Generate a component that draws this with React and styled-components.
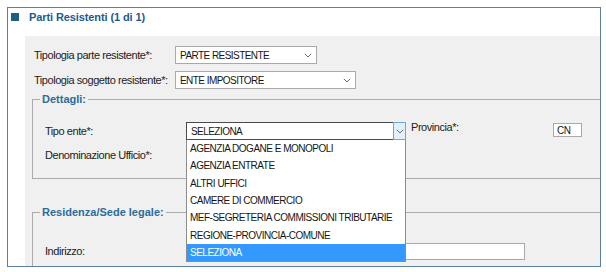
import React from "react";
import styled, { createGlobalStyle } from "styled-components";

const GlobalStyle = createGlobalStyle`
  html, body { margin: 0; padding: 0; background: #ffffff; }
  body { font-family: "Liberation Sans", Arial, sans-serif; }
  * { box-sizing: border-box; }
`;

const Page = styled.div`
  padding: 7px 5px 0 7px;
  width: 606px;
`;

const Frame = styled.div`
  border: 1px solid #5b80a4;
  height: 260px;
  overflow: hidden;
  background: #ffffff;
  display: flex;
  flex-direction: column;
`;

const Header = styled.div`
  height: 28px;
  padding: 0 0 10px 3px;
  display: flex;
  align-items: center;
  gap: 10px;
  flex: none;
`;

const Square = styled.span`
  width: 8px;
  height: 8px;
  background: #1d5f7e;
  display: block;
`;

const Title = styled.span`
  font-size: 11px;
  font-weight: bold;
  color: #1b5c8c;
  letter-spacing: -0.1px;
  line-height: 14px;
`;

const Panel = styled.div`
  flex: 1;
  margin-left: 17px;
  background: #f0f0f0;
  padding: 10px 0 0 7px;
`;

const TopRow = styled.div`
  display: flex;
  align-items: center;
  height: 18px;
  padding-left: 2px;
  margin-bottom: ${(p) => p.$gap || 0}px;
`;

const Label = styled.span`
  width: ${(p) => p.$w || 141}px;
  flex: none;
  font-size: 11px;
  letter-spacing: -0.45px;
  color: #222222;
  line-height: 13px;
  align-self: ${(p) => (p.$top ? "flex-start" : "center")};
  margin-top: ${(p) => p.$mt || 0}px;
`;

const SelectBox = styled.div`
  position: relative;
  width: ${(p) => p.$w}px;
  height: 18px;
  flex: none;
  background: #ffffff;
  border: 1px solid ${(p) => (p.$focused ? "#4a4a4a" : "#a9a9a9")};
  display: flex;
  align-items: center;
  padding-left: 4px;
  font-size: 10px;
  letter-spacing: -0.55px;
  color: #151515;
  line-height: 12px;
`;

const SelectText = styled.span`
  flex: 1;
  padding-top: 1px;
`;

const ArrowArea = styled.span`
  width: ${(p) => (p.$focused ? 13 : 16)}px;
  align-self: stretch;
  display: flex;
  align-items: center;
  justify-content: center;
  background: ${(p) => (p.$focused ? "#e3effa" : "transparent")};
  border: ${(p) => (p.$focused ? "1px solid #6ea6da" : "none")};
  margin: ${(p) => (p.$focused ? "-1px -1px -1px 0" : "0")};
`;

const Chevron = () => (
  <svg width="8" height="5" viewBox="0 0 8 5">
    <path d="M0.8 0.8 L4 4 L7.2 0.8" fill="none" stroke="#6a6a6a" strokeWidth="1" />
  </svg>
);

const Select = ({ w, value, focused, children }) => (
  <SelectBox $w={w} $focused={focused}>
    <SelectText>{value}</SelectText>
    <ArrowArea $focused={focused}>
      <Chevron />
    </ArrowArea>
    {children}
  </SelectBox>
);

const Fieldset = styled.fieldset`
  margin: ${(p) => p.$mt}px -10px 0 0;
  border: 1px solid #ababab;
  padding: ${(p) => p.$pt}px 0 ${(p) => p.$pb}px 12px;
  min-width: 0;
`;

const Legend = styled.legend`
  margin-left: -5px;
  padding: 0 2px;
  font-size: 11px;
  font-weight: bold;
  color: #2c6c9c;
  line-height: 13px;
`;

const FieldRow = styled.div`
  display: flex;
  align-items: center;
  height: ${(p) => p.$h || 18}px;
  margin-top: ${(p) => p.$mt || 0}px;
`;

const TextInput = styled.div`
  width: ${(p) => p.$w}px;
  height: ${(p) => p.$h}px;
  flex: none;
  background: #ffffff;
  border: 1px solid #a9a9a9;
  font-size: 10px;
  letter-spacing: -0.4px;
  color: #151515;
  display: flex;
  align-items: center;
  padding: 1px 0 0 3px;
  align-self: ${(p) => (p.$top ? "flex-start" : "center")};
  margin-top: ${(p) => p.$mt || 0}px;
`;

const Spacer = styled.span`
  width: ${(p) => p.$w}px;
  flex: none;
`;

const DropList = styled.div`
  position: absolute;
  top: 100%;
  left: -1px;
  width: 220px;
  margin-top: 1px;
  background: #ffffff;
  border: 1px solid #8c8c8c;
  border-top: none;
  z-index: 10;
`;

const DropItem = styled.div`
  height: 17.3px;
  display: flex;
  align-items: center;
  padding: 1px 0 0 3px;
  font-size: 10px;
  letter-spacing: -0.5px;
  color: ${(p) => (p.$active ? "#ffffff" : "#151515")};
  background: ${(p) => (p.$active ? "#3399ff" : "transparent")};
`;

const options = [
  "AGENZIA DOGANE E MONOPOLI",
  "AGENZIA ENTRATE",
  "ALTRI UFFICI",
  "CAMERE DI COMMERCIO",
  "MEF-SEGRETERIA COMMISSIONI TRIBUTARIE",
  "REGIONE-PROVINCIA-COMUNE",
  "SELEZIONA",
];

export default function App() {
  return (
    <>
      <GlobalStyle />
      <Page>
        <Frame>
          <Header>
            <Square />
            <Title>Parti Resistenti (1 di 1)</Title>
          </Header>
          <Panel>
            <TopRow $gap={7}>
              <Label>Tipologia parte resistente*:</Label>
              <Select w={142} value="PARTE RESISTENTE" />
            </TopRow>
            <TopRow>
              <Label>Tipologia soggetto resistente*:</Label>
              <Select w={181} value="ENTE IMPOSITORE" />
            </TopRow>

            <Fieldset $mt={4} $pt={16} $pb={14}>
              <Legend>Dettagli:</Legend>
              <FieldRow>
                <Label>Tipo ente*:</Label>
                <Select w={220} value="SELEZIONA" focused>
                  <DropList>
                    {options.map((o) => (
                      <DropItem key={o} $active={o === "SELEZIONA"}>
                        {o}
                      </DropItem>
                    ))}
                  </DropList>
                </Select>
                <Spacer $w={5} />
                <Label $w={142} $top $mt={-1}>Provincia*:</Label>
                <TextInput $w={29} $h={14} $top $mt={1}>CN</TextInput>
              </FieldRow>
              <FieldRow $mt={6}>
                <Label>Denominazione Ufficio*:</Label>
              </FieldRow>
            </Fieldset>

            <Fieldset $mt={27} $pt={24} $pb={20}>
              <Legend>Residenza/Sede legale:</Legend>
              <FieldRow $h={17}>
                <Label>Indirizzo:</Label>
                <TextInput $w={339} $h={17} />
              </FieldRow>
            </Fieldset>
          </Panel>
        </Frame>
      </Page>
    </>
  );
}
